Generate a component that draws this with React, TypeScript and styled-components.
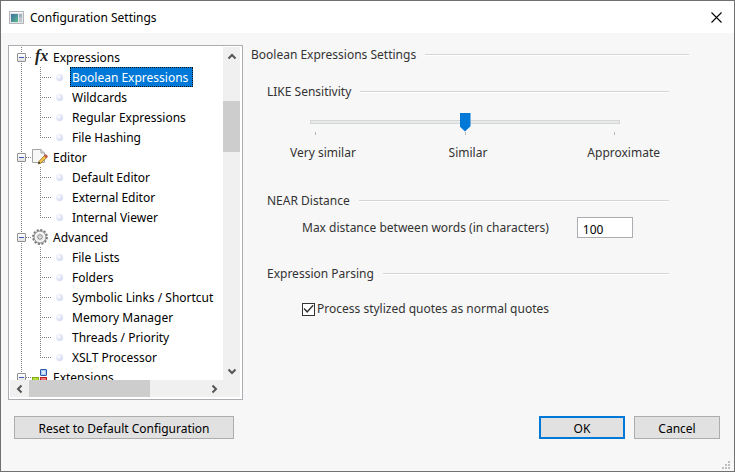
import React, { useState } from "react";
import styled, { createGlobalStyle, css } from "styled-components";

const GlobalStyle = createGlobalStyle`
  *, *::before, *::after { box-sizing: border-box; }
  body {
    margin: 0;
    font-family: "Noto Sans", "Open Sans", sans-serif;
    font-size: 12px;
    line-height: 20px;
    color: #333;
  }
  button, input { font: inherit; }
  ul { list-style: none; margin: 0; padding: 0; }
`;

const dotsDown = "repeating-linear-gradient(to bottom, #808080 0 1px, transparent 1px 2px)";
const dotsAcross = "repeating-linear-gradient(to right, #808080 0 1px, transparent 1px 2px)";

/* ---------- window ---------- */

const Dialog = styled.div`
  display: flex;
  flex-direction: column;
  height: 100vh;
  background: #f7f7f7;
  border: 1px solid #707070;
`;

const TitleBar = styled.header`
  display: flex;
  align-items: center;
  gap: 6px;
  height: 32px;
  flex: none;
  padding: 0 8px;
  background: #fff;
`;

const Title = styled.h1`
  flex: 1;
  margin: 0;
  padding-top: 2px;
  font-size: 12px;
  font-weight: 400;
  color: #000;
`;

const CloseButton = styled.button`
  display: flex;
  padding: 4px;
  border: 0;
  background: none;
`;

const Body = styled.main`
  display: flex;
  flex: 1;
  min-height: 0;
  gap: 8px;
  padding: 12px 45px 0 7px;
`;

const Footer = styled.footer`
  display: flex;
  gap: 9px;
  flex: none;
  padding: 16px 14px 0 13px;
`;

const PushButton = styled.button<{ $primary?: boolean; $wide?: boolean }>`
  width: ${(p) => (p.$wide ? 220 : 86)}px;
  height: 23px;
  padding: 2px 0 0;
  line-height: 16px;
  color: #000;
  background: #e1e1e1;
  border: ${(p) => (p.$primary ? "2px solid #0078d7" : "1px solid #adadad")};
  ${(p) => p.$wide && css`margin-right: auto;`}
`;

const StatusCorner = styled.div`
  display: flex;
  justify-content: flex-end;
  align-items: flex-end;
  height: 32px;
  flex: none;
  padding: 0 4px 2px;
`;

/* ---------- tree ---------- */

const TreeFrame = styled.nav`
  display: grid;
  grid-template-columns: 1fr 17px;
  grid-template-rows: 1fr 17px;
  width: 235px;
  flex: none;
  padding: 1px 2px 2px 1px;
  background: #fff;
  border: 1px solid #abadb3;
`;

const TreeView = styled.div`
  overflow: hidden;
  min-height: 0;
  padding-left: 7px;
  color: #000;
`;

const Branch = styled.li`
  background: ${dotsDown} 4px 0 / 1px 100% no-repeat;
  &:last-child { background-size: 1px 10px; }
`;

const BranchRow = styled.div`
  display: flex;
  align-items: center;
  height: 20px;
`;

const Toggle = styled.button`
  display: flex;
  align-items: center;
  justify-content: center;
  width: 9px;
  height: 9px;
  flex: none;
  padding: 0;
  border: 1px solid #919191;
  border-radius: 1px;
  background: linear-gradient(#fff, #e2e2e2);
  &::before {
    content: "";
    width: 5px;
    height: 1px;
    background: #3f5fb4;
  }
`;

const Dots = styled.span<{ $width: number }>`
  flex: 0 0 ${(p) => p.$width}px;
  height: 1px;
  background: ${dotsAcross};
`;

const BranchLabel = styled.span`
  padding: 2px 0 0 5px;
  white-space: nowrap;
`;

const Leaf = styled.li`
  display: flex;
  align-items: center;
  height: 20px;
  margin-left: 23px;
  background: ${dotsDown} 0 0 / 1px 100% no-repeat;
  &:last-child { background-size: 1px 11px; }
`;

const LeafIcon = styled.span`
  width: 7px;
  height: 7px;
  flex: none;
  margin: 0 7px 0 5px;
  border-radius: 50%;
  background: radial-gradient(circle at 35% 35%, #fff, #dfe4f6 50%, #c3cbea);
`;

const LeafButton = styled.button<{ $selected: boolean }>`
  height: 20px;
  padding: 2px 4px 0 1px;
  border: 1px solid transparent;
  background: none;
  line-height: 16px;
  color: #000;
  white-space: nowrap;
  ${(p) =>
    p.$selected &&
    css`
      color: #fff;
      background: #0078d7;
      border: 1px dotted #ff8728;
      outline: 1px dotted #101010;
      outline-offset: -1px;
    `}
`;

const ScrollBar = styled.div<{ $horizontal?: boolean }>`
  display: flex;
  flex-direction: ${(p) => (p.$horizontal ? "row" : "column")};
  background: #f0f0f0;
`;

const ScrollArrow = styled.button`
  display: flex;
  align-items: center;
  justify-content: center;
  flex: 0 0 19px;
  padding: 0;
  border: 0;
  background: none;
`;

const Rail = styled.div<{ $horizontal?: boolean }>`
  display: grid;
  flex: 1;
  ${(p) =>
    p.$horizontal
      ? css`grid-template-columns: 0 121fr 54fr;`
      : css`grid-template-rows: 35fr 51fr 209fr;`}
`;

const Thumb = styled.div<{ $horizontal?: boolean }>`
  background: #cdcdcd;
  ${(p) => (p.$horizontal ? css`grid-column: 2;` : css`grid-row: 2;`)}
`;

const Corner = styled.div`
  background: #f0f0f0;
`;

/* ---------- settings ---------- */

const Panel = styled.div`
  flex: 1;
  min-width: 0;
`;

const Heading = styled.h2`
  display: flex;
  align-items: center;
  gap: 9px;
  margin: 0;
  font-size: 12px;
  font-weight: 400;
  white-space: nowrap;
  &::after {
    content: "";
    flex: 1;
    height: 2px;
    background: linear-gradient(#d5d5d5 50%, #fff 50%);
  }
`;

const Section = styled.section`
  padding: 17px 20px 0 16px;
`;

const SliderBox = styled.div`
  padding: 10px 49px 0 43px;
`;

const Slider = styled.input`
  display: block;
  width: 100%;
  height: 19px;
  margin: 0;
  appearance: none;
  background: none;
  &::-webkit-slider-runnable-track {
    height: 4px;
    border: 1px solid #d6d6d6;
    background: #e7eaea;
  }
  &::-webkit-slider-thumb {
    appearance: none;
    width: 11px;
    height: 19px;
    margin-top: -8px;
    background: #0078d7;
    clip-path: polygon(0 0, 100% 0, 100% 72%, 50% 100%, 0 72%);
  }
`;

const Ticks = styled.div`
  display: flex;
  justify-content: space-between;
  padding: 1px 5px 0;
`;

const Tick = styled.span`
  width: 1px;
  height: 3px;
  background: #b8b8b8;
`;

const TickLabels = styled.div`
  display: grid;
  grid-template-columns: 8fr 7fr auto;
  padding: 8px 9px 11px 23px;
`;

const FieldRow = styled.div`
  display: flex;
  align-items: center;
  gap: 28px;
  padding: 6px 0 9px 35px;
`;

const NumberInput = styled.input`
  width: 56px;
  height: 21px;
  padding: 3px 5px 0;
  line-height: 16px;
  color: #000;
  background: #fff;
  border: 1px solid #abadb3;
  border-radius: 0;
`;

const CheckRow = styled.label`
  display: flex;
  align-items: center;
  gap: 2px;
  padding: 15px 0 0 35px;
`;

const CheckBox = styled.input`
  display: grid;
  place-items: center;
  appearance: none;
  width: 13px;
  height: 13px;
  margin: 0;
  background: #fff;
  border: 1px solid #333;
  &:checked::before {
    content: "";
    width: 11px;
    height: 9px;
    background: #333;
    clip-path: polygon(5% 50%, 14% 38%, 38% 70%, 88% 4%, 97% 14%, 38% 94%);
  }
`;

/* ---------- icons ---------- */

const AppIcon = () => (
  <svg width="15" height="13" viewBox="0 0 15 13" aria-hidden="true">
    <defs>
      <linearGradient id="screen" x1="0" y1="0" x2="1" y2="1">
        <stop offset="0" stopColor="#3e6fa3" />
        <stop offset="1" stopColor="#59b98a" />
      </linearGradient>
    </defs>
    <rect x=".5" y=".5" width="14" height="12" fill="#e3e5e8" stroke="#b3b6ba" />
    <path d="M1 1.500h13" stroke="#f7f7f7" />
    <rect x="2" y="3" width="7" height="8" fill="url(#screen)" />
    <rect x="10" y="3" width="3" height="8" fill="#b9c9cf" />
    <rect x="10" y="3" width="3" height="3" fill="#9fb2c4" />
  </svg>
);

const CloseIcon = () => (
  <svg width="11" height="11" viewBox="0 0 11 11" aria-hidden="true">
    <path d="M.5 .5l10 10M10.500 .5l-10 10" stroke="#000" strokeWidth="1.100" />
  </svg>
);

const FunctionIcon = () => (
  <svg width="16" height="20" viewBox="0 0 16 20" aria-hidden="true">
    <text x="3" y="14" fontFamily="Liberation Serif, serif" fontStyle="italic" fontWeight="700" fontSize="16" fill="#222">
      fx
    </text>
  </svg>
);

const PageIcon = () => (
  <svg width="16" height="16" viewBox="0 0 16 16" aria-hidden="true">
    <path d="M.5 .5H9L12.500 4V13.500H.5z" fill="#f7f7f7" stroke="#a3a3a3" />
    <path d="M9 .5V4h3.500" fill="#ddd" stroke="#a3a3a3" />
    <path d="M7 12.300L13 6l2.200 2.200-6.400 6L6.200 15z" fill="#f3c148" stroke="#8a6420" strokeWidth=".7" />
    <path d="M12.300 6.800L13.700 5.300l2 2-1.500 1.600z" fill="#cf5b4d" stroke="#9a4038" strokeWidth=".5" />
    <path d="M6.200 15l.7-2.400 1.700 1.700z" fill="#2d2d2d" />
  </svg>
);

const GearIcon = () => (
  <svg width="16" height="16" viewBox="0 0 16 16" aria-hidden="true">
    <circle cx="8" cy="8" r="7" fill="none" stroke="#777" strokeWidth="1.800" strokeDasharray="2.200 1.465" />
    <circle cx="8" cy="8" r="6" fill="#e6e6e6" stroke="#8c8c8c" />
    <circle cx="8" cy="8" r="4.400" fill="none" stroke="#f7f7f7" strokeWidth="1.300" />
    <circle cx="8" cy="8" r="2.200" fill="#fff" stroke="#808080" />
    <circle cx="8" cy="8" r=".8" fill="#aaa" />
  </svg>
);

const BlocksIcon = () => (
  <svg width="16" height="16" viewBox="0 0 16 16" aria-hidden="true">
    <rect x="8.500" y=".5" width="6" height="6" rx=".5" fill="#a9ccf5" stroke="#2856a3" />
    <rect x="10" y="2" width="3" height="3" fill="#d6e8fd" />
    <rect x=".5" y="8.500" width="6" height="6" fill="#b5dc3e" stroke="#7fae12" />
    <rect x="8.500" y="8.500" width="6" height="6" fill="#ef7474" stroke="#b51f1f" />
  </svg>
);

const arrowPaths = {
  up: "M1.500 6.500L5 3l3.500 3.500",
  down: "M1.500 3.500L5 7l3.500-3.500",
  left: "M6.500 1.500L3 5l3.500 3.500",
  right: "M3.500 1.500L7 5l-3.500 3.500",
};

const Arrow = ({ to }: { to: keyof typeof arrowPaths }) => (
  <ScrollArrow type="button" aria-label={`Scroll ${to}`}>
    <svg width="10" height="10" viewBox="0 0 10 10" aria-hidden="true">
      <path d={arrowPaths[to]} fill="none" stroke="#555" strokeWidth="2" />
    </svg>
  </ScrollArrow>
);

const GripIcon = () => (
  <svg width="8" height="8" viewBox="0 0 8 8" fill="#bfbfbf" aria-hidden="true">
    <path d="M6 0h2v2H6zM3 3h2v2H3zM6 3h2v2H6zM0 6h2v2H0zM3 6h2v2H3zM6 6h2v2H6z" />
  </svg>
);

/* ---------- data ---------- */

const branches = [
  {
    name: "Expressions",
    icon: <FunctionIcon />,
    items: ["Boolean Expressions", "Wildcards", "Regular Expressions", "File Hashing"],
  },
  { name: "Editor", icon: <PageIcon />, items: ["Default Editor", "External Editor", "Internal Viewer"] },
  {
    name: "Advanced",
    icon: <GearIcon />,
    items: ["File Lists", "Folders", "Symbolic Links / Shortcut", "Memory Manager", "Threads / Priority", "XSLT Processor"],
  },
  { name: "Extensions", icon: <BlocksIcon />, items: [] as string[] },
];

export default function App() {
  const [selected, setSelected] = useState("Boolean Expressions");
  return (
    <>
      <GlobalStyle />
      <Dialog role="dialog" aria-labelledby="title">
        <TitleBar>
          <AppIcon />
          <Title id="title">Configuration Settings</Title>
          <CloseButton type="button" aria-label="Close">
            <CloseIcon />
          </CloseButton>
        </TitleBar>
        <Body>
          <TreeFrame aria-label="Settings">
            <TreeView>
              <ul>
                {branches.map((branch) => (
                  <Branch key={branch.name}>
                    <BranchRow>
                      <Toggle type="button" aria-label={`Collapse ${branch.name}`} />
                      <Dots $width={6} />
                      {branch.icon}
                      <BranchLabel>{branch.name}</BranchLabel>
                    </BranchRow>
                    <ul>
                      {branch.items.map((item) => (
                        <Leaf key={item}>
                          <Dots $width={11} />
                          <LeafIcon />
                          <LeafButton type="button" $selected={item === selected} onClick={() => setSelected(item)}>
                            {item}
                          </LeafButton>
                        </Leaf>
                      ))}
                    </ul>
                  </Branch>
                ))}
              </ul>
            </TreeView>
            <ScrollBar>
              <Arrow to="up" />
              <Rail>
                <Thumb />
              </Rail>
              <Arrow to="down" />
            </ScrollBar>
            <ScrollBar $horizontal>
              <Arrow to="left" />
              <Rail $horizontal>
                <Thumb $horizontal />
              </Rail>
              <Arrow to="right" />
            </ScrollBar>
            <Corner />
          </TreeFrame>
          <Panel>
            <Heading>Boolean Expressions Settings</Heading>
            <Section>
              <Heading as="h3" id="like">LIKE Sensitivity</Heading>
              <SliderBox>
                <Slider type="range" min={0} max={2} step={1} defaultValue={1} aria-labelledby="like" />
                <Ticks>
                  <Tick />
                  <Tick />
                  <Tick />
                </Ticks>
              </SliderBox>
              <TickLabels>
                <span>Very similar</span>
                <span>Similar</span>
                <span>Approximate</span>
              </TickLabels>
            </Section>
            <Section>
              <Heading as="h3">NEAR Distance</Heading>
              <FieldRow>
                <label htmlFor="distance">Max distance between words (in characters)</label>
                <NumberInput id="distance" type="text" inputMode="numeric" defaultValue="100" />
              </FieldRow>
            </Section>
            <Section>
              <Heading as="h3">Expression Parsing</Heading>
              <CheckRow>
                <CheckBox type="checkbox" defaultChecked />
                Process stylized quotes as normal quotes
              </CheckRow>
            </Section>
          </Panel>
        </Body>
        <Footer>
          <PushButton type="button" $wide>Reset to Default Configuration</PushButton>
          <PushButton type="button" $primary>OK</PushButton>
          <PushButton type="button">Cancel</PushButton>
        </Footer>
        <StatusCorner>
          <GripIcon />
        </StatusCorner>
      </Dialog>
    </>
  );
}
